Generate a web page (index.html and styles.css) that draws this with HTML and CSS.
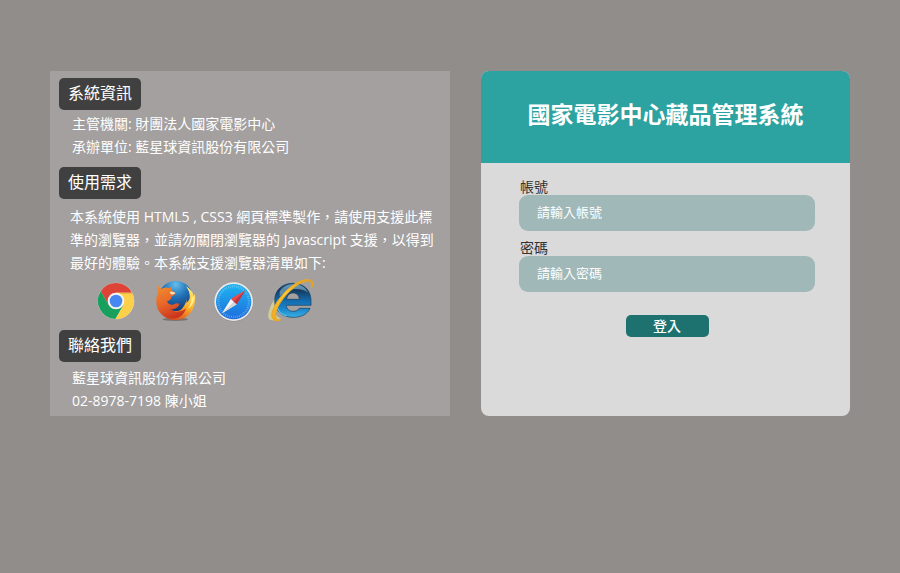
FILE: index.html
```html
<!DOCTYPE html>
<html lang="zh-Hant">
<head>
<meta charset="utf-8">
<meta name="viewport" content="width=device-width, initial-scale=1">
<title>國家電影中心藏品管理系統</title>
<link rel="stylesheet" href="styles.css">
</head>
<body>
<main class="page">
  <section class="info">
    <h2 class="tag">系統資訊</h2>
    <div class="lines">
      <p>主管機關: 財團法人國家電影中心</p>
      <p>承辦單位: 藍星球資訊股份有限公司</p>
    </div>
    <h2 class="tag">使用需求</h2>
    <p class="needs">本系統使用 HTML5 , CSS3 網頁標準製作，請使用支援此標準的瀏覽器，並請勿關閉瀏覽器的 Javascript 支援，以得到最好的體驗。本系統支援瀏覽器清單如下:</p>
    <div class="browsers">
      <svg class="browser" viewBox="9 21 138 132" role="img" aria-label="Chrome">
        <circle cx="78" cy="87" r="55" fill="#d9d3cd"/>
        <path d="M32.3 57.9A54 54 0 0 1 126 62L78 62L78 87L56.3 99.5Z" fill="#dd4437"/>
        <path d="M126 62A54 54 0 0 1 75.6 141L99.6 99.5L78 87L78 62Z" fill="#fdd04b"/>
        <path d="M75.6 141A54 54 0 0 1 32.3 57.9L56.3 99.5L78 87L99.6 99.5Z" fill="#17a05d"/>
        <path d="M78 62H126L128 67L92 66Z" fill="#c9962a" opacity=".35"/>
        <circle cx="78" cy="87" r="25" fill="#f4f4f2"/>
        <circle cx="78" cy="87" r="19" fill="#4688f1"/>
      </svg>
      <svg class="browser" viewBox="186 21 138 132" role="img" aria-label="Firefox">
        <defs>
          <radialGradient id="ff-globe" cx=".5" cy=".1" r=".8"><stop offset="0" stop-color="#65bdea"/><stop offset=".45" stop-color="#2272b8"/><stop offset="1" stop-color="#12356f"/></radialGradient>
          <linearGradient id="ff-fur" x1=".2" y1="0" x2=".6" y2="1"><stop offset="0" stop-color="#f08a2e"/><stop offset=".5" stop-color="#e8662a"/><stop offset="1" stop-color="#c8321d"/></linearGradient>
          <linearGradient id="ff-tail" x1=".7" y1="0" x2=".3" y2="1"><stop offset="0" stop-color="#ffec7b"/><stop offset=".5" stop-color="#fbb02c"/><stop offset="1" stop-color="#d8481f"/></linearGradient>
        </defs>
        <ellipse cx="256" cy="142" rx="38" ry="5" fill="#544d49" opacity=".55"/>
        <circle cx="257" cy="79" r="52" fill="url(#ff-globe)"/>
        <path d="M288 43C300 50 309 60 311 72L315 66C320 96 305 132 276 141C253 148 228 142 214 125L238 110C250 120 268 119 276 110C285 101 287 91 291 81L289 93C298 86 301 78 299 68C298 57 292 50 288 43Z" fill="url(#ff-tail)"/>
        <path d="M206 40C206 46 209 49 214 51C221 46 230 45 238 49L246 42C243 49 244 54 248 58L257 63C257 67 250 71 244 74L243 80C239 85 235 87 231 88C234 97 244 101 252 97C259 93 265 92 268 97C264 108 252 114 240 112C254 123 275 120 288 109C282 131 264 143 241 139C215 135 197 113 199 86C198 76 201 68 205 62C202 53 202 46 206 40Z" fill="url(#ff-fur)"/>
        <path d="M239 61C244 58 251 60 256 63C254 67 248 68 243 67Z" fill="#fae0b8"/>
        <path d="M302 59C308 76 305 98 292 112C307 103 314 87 312 72L306 78Z" fill="#fff091"/>
      </svg>
      <svg class="browser" viewBox="18 21 138 132" role="img" aria-label="Safari">
        <defs><linearGradient id="sf-face" x1="0" y1="0" x2="0" y2="1"><stop offset="0" stop-color="#20b5f0"/><stop offset="1" stop-color="#1d6cdd"/></linearGradient></defs>
        <circle cx="86" cy="90" r="59" fill="#827e7c" opacity=".5"/>
        <circle cx="86" cy="89" r="58" fill="#eceae8"/>
        <circle cx="86" cy="89" r="53" fill="url(#sf-face)"/>
        <circle cx="86" cy="89" r="46" fill="none" stroke="#c8ebff" stroke-width="7" stroke-dasharray="2 4" opacity=".5"/>
        <path d="M51 124L78 80L95 97Z" fill="#f7f6f6"/>
        <path d="M51 124L86 89L95 97Z" fill="#d4d7dc"/>
        <path d="M122 54L78 80L86 89Z" fill="#f24a43"/>
        <path d="M122 54L86 89L95 97Z" fill="#cf2f38"/>
      </svg>
      <svg class="browser" viewBox="195 21 138 132" role="img" aria-label="Internet Explorer">
        <defs>
          <linearGradient id="ie-body" x1="0" y1="0" x2="0" y2="1"><stop offset="0" stop-color="#23608c"/><stop offset=".2" stop-color="#153a5d"/><stop offset=".5" stop-color="#126aac"/><stop offset=".75" stop-color="#1a85cc"/><stop offset="1" stop-color="#3cb0e4"/></linearGradient>
          <linearGradient id="ie-ring" x1="1" y1="0" x2="0" y2="1"><stop offset="0" stop-color="#dc9620"/><stop offset=".5" stop-color="#ffc832"/><stop offset="1" stop-color="#f2a71c"/></linearGradient>
        </defs>
        <path d="M222 62C195 95 185 128 192 142C202 148 217 145 228 140C210 133 205 116 209 94C211 80 218 69 222 62Z" fill="#d8d394" opacity=".85"/>
        <path fill-rule="evenodd" d="M318 100H244C245 111 253 118 264 118C273 118 279 115 283 109H315C308 126 289 136 264 136C231 136 209 116 209 86C209 54 231 34 264 34C299 34 320 57 318 92ZM245 82H283C282 70 275 63 264 63C254 63 246 70 245 82Z" fill="url(#ie-body)" stroke="#143d60" stroke-width="2"/>
        <path d="M224 58C235 42 250 37 267 37C287 37 302 46 309 62C289 47 252 45 224 73Z" fill="#b9e4fb" opacity=".45"/>
        <path d="M214 97C217 116 229 128 245 132" fill="none" stroke="#62cdf7" stroke-width="4" opacity=".7"/>
        <path d="M320 47C329 33 323 22 305 23C275 23 228 63 207 106C193 137 203 152 227 144C211 144 206 132 218 106C236 70 276 33 303 28C318 25 323 33 320 47Z" fill="url(#ie-ring)" stroke="#e9a826" stroke-width="3"/>
      </svg>
    </div>
    <h2 class="tag">聯絡我們</h2>
    <div class="lines contact">
      <p>藍星球資訊股份有限公司</p>
      <p>02-8978-7198 陳小姐</p>
    </div>
  </section>

  <section class="login">
    <header class="login-head">
      <h1>國家電影中心藏品管理系統</h1>
    </header>
    <form class="login-form">
      <label for="account">帳號</label>
      <input id="account" type="text" placeholder="請輸入帳號">
      <label for="password">密碼</label>
      <input id="password" type="password" placeholder="請輸入密碼">
      <button type="submit">登入</button>
    </form>
  </section>
</main>
</body>
</html>
```
FILE: styles.css
```css
* {
  box-sizing: border-box;
}

body {
  margin: 0;
  background: #918d8b;
  color: #fff;
  font-family: "Open Sans", "Noto Sans CJK TC", sans-serif;
  font-size: 14px;
  font-weight: 400;
  line-height: 23px;
}

h1,
h2,
p {
  margin: 0;
}

.page {
  display: grid;
  grid-template-columns: 400fr 369fr;
  gap: 31px;
  padding: 71px 50px;
}

.info {
  padding: 7px 9px 4px;
  background: #a3a09f;
}

.tag {
  width: fit-content;
  padding: 0 9px 2px;
  border-radius: 5px;
  background: #404040;
  font-size: 16px;
  font-weight: 400;
  line-height: 30px;
}

.lines {
  padding: 2px 0 9px 13px;
}

.needs {
  padding: 6px 4px 0 11px;
}

.browsers {
  display: flex;
  gap: 13px;
  padding: 5px 0 7px 34px;
}

.browser {
  width: 46px;
  height: 44px;
  overflow: visible;
}

.contact {
  padding: 4px 0 0 13px;
}

.login {
  overflow: hidden;
  border-radius: 8px;
  background: #dadada;
}

.login-head {
  padding: 27px 16px 33px;
  background: #2ca3a1;
  text-align: center;
}

.login-head h1 {
  font-size: 23px;
  font-weight: 700;
  line-height: 32px;
}

.login-form {
  display: flex;
  flex-direction: column;
  padding: 16px 35px 24px 38px;
}

.login-form label {
  padding-left: 1px;
  color: #333;
  line-height: 16px;
}

.login-form input {
  height: 36px;
  margin: 0 0 9px;
  padding: 0 18px 2px;
  border: 0;
  border-radius: 9px;
  background: #a0b8b7;
  color: #fff;
  font: inherit;
  font-size: 13px;
}

.login-form input::placeholder {
  color: #fff;
  opacity: 1;
}

.login-form button {
  align-self: center;
  width: 83px;
  height: 22px;
  margin-top: 14px;
  padding: 0;
  border: 0;
  border-radius: 5px;
  background: #1d716f;
  color: #fff;
  font: inherit;
  font-weight: 500;
  line-height: 22px;
}
```
